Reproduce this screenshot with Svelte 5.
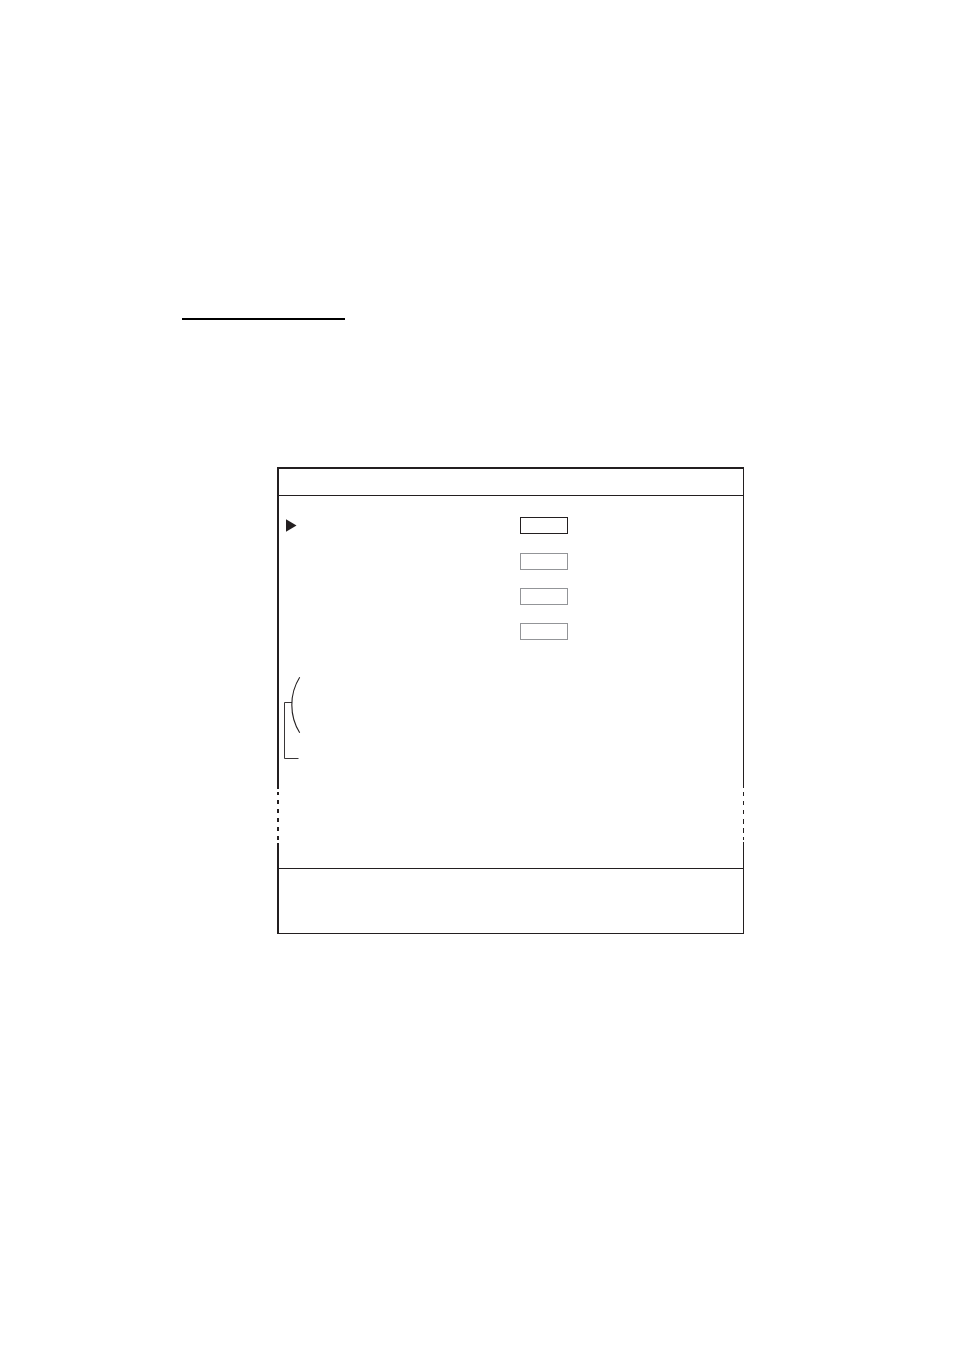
<script>
  const settings = $state(['', '', '']);
  let current = $state('');

  // Dash positions [top, height] along the shortened part of the frame
  const leftDashes = [[0, 1], [4, 3], [12, 4], [21, 4], [30, 4], [39, 4], [48, 4]];
  const rightDashes = [[4, 4], [13, 4], [22, 4], [31, 5], [40, 5], [49, 3], [54, 1]];
</script>

<main>
  <hr class="title-rule" />

  <section class="frame">
    <header></header>

    <div class="body">
      <div class="row">
        <svg class="marker" width="11" height="13" viewBox="0 0 11 13" aria-hidden="true">
          <path d="M0 0.3 L10.5 6.5 L0 12.7 Z" fill="#231f20" />
        </svg>
        <input class="active" aria-label="Selected setting" bind:value={current} />
      </div>

      <div class="group">
        {#each settings as _, i}
          <div class="row">
            <input aria-label={`Setting ${i + 2}`} bind:value={settings[i]} />
          </div>
        {/each}
      </div>

      <svg class="bracket" width="17" height="83" viewBox="0 0 17 83" fill="none" stroke="#231f20" aria-hidden="true">
        <path d="M15.7 0.3 C5.2 17 5.2 39 15.7 55.8" stroke-width="1.1" />
        <path d="M8 25.5 H0.5 V81.5 H14.5" stroke-width="0.9" />
      </svg>
    </div>

    <div class="break" aria-hidden="true">
      <svg width="2" height="55" viewBox="0 0 2 55" fill="#231f20">
        {#each leftDashes as [y, h]}
          <rect x="0" {y} width="2" height={h} />
        {/each}
      </svg>
      <svg width="1" height="55" viewBox="0 0 1 55" fill="#231f20">
        {#each rightDashes as [y, h]}
          <rect x="0" {y} width="1" height={h} />
        {/each}
      </svg>
    </div>

    <div class="tail"></div>
    <footer></footer>
  </section>
</main>

<style>
  :global(body) {
    background: #fff;
    font-family: "Liberation Sans", Arial, sans-serif;
  }

  main {
    padding: 318px 210px 417px 182px;
  }

  .title-rule {
    width: 163px;
    height: 2px;
    margin: 0;
    border: 0;
    background: #000;
  }

  .frame {
    margin: 147px 0 0 95px;
  }

  header,
  .body,
  .tail,
  footer {
    box-sizing: border-box;
    border: 0 solid #231f20;
    border-left-width: 2px;
    border-right-width: 1px;
  }

  header {
    min-height: 29px;
    border-top-width: 2px;
    border-bottom-width: 1px;
  }

  .body {
    padding: 21px 5px 28px;
  }

  .row {
    display: grid;
    grid-template-columns: 236px 48px;
    align-items: center;
  }

  .marker {
    margin-left: 2px;
  }

  input {
    grid-column: 2;
    box-sizing: border-box;
    width: 100%;
    height: 17px;
    margin: 0;
    padding: 0 3px;
    border: 1px solid #939598;
    border-radius: 0;
    background: #fff;
    font: 12px "Liberation Sans", Arial, sans-serif;
  }

  input.active {
    border-color: #231f20;
  }

  .group {
    display: grid;
    gap: 18px;
    margin-top: 19px;
  }

  .bracket {
    display: block;
    margin-top: 37px;
  }

  .break {
    display: flex;
    justify-content: space-between;
  }

  .break svg {
    display: block;
  }

  .tail {
    min-height: 25px;
  }

  footer {
    min-height: 66px;
    border-top-width: 1px;
    border-bottom-width: 1px;
  }
</style>
